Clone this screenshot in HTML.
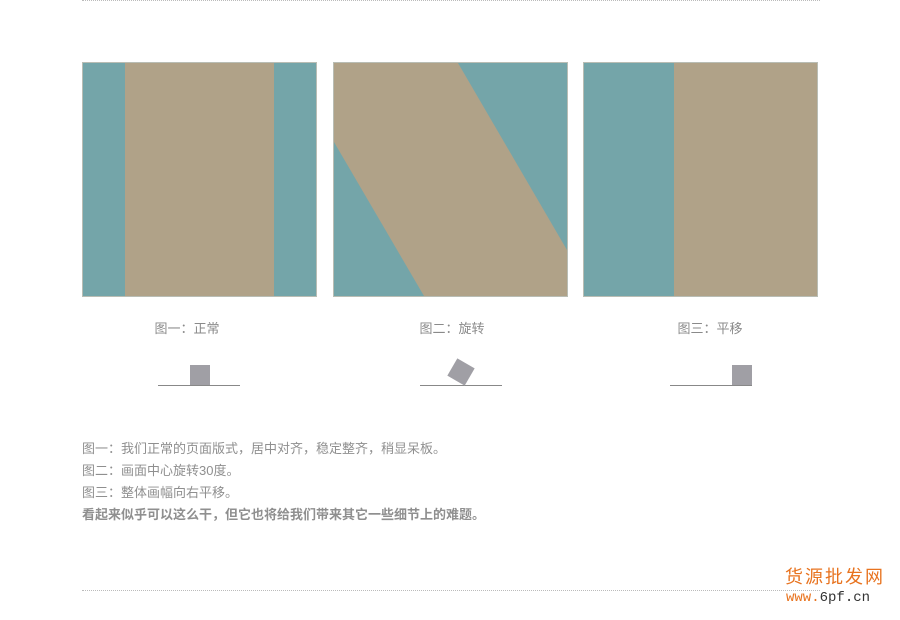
<!DOCTYPE html>
<html><head><meta charset="utf-8"><style>
body{margin:0;width:900px;height:620px;background:#fff;position:relative;overflow:hidden;font-family:"Liberation Sans","Noto Sans CJK SC",sans-serif}
.dot{position:absolute;left:82px;width:738px;border-top:1px dotted #bbb}
.cap{position:absolute;top:318px;font-size:13px;color:#8a8a8a;width:140px;text-align:center}
.ln{position:absolute;top:385px;width:82px;height:1px;background:#888}
.sq{position:absolute;width:20px;height:20px;background:#a09fa5}
.t{position:absolute;left:82px;font-size:13px;color:#8f8f8f;line-height:22px}
</style></head><body>
<div class="dot" style="top:0"></div>
<div class="dot" style="top:590px"></div>
<svg style="position:absolute;left:0;top:0" width="900" height="310">
<rect x="82.5" y="62.5" width="234" height="234" fill="#74a5a9" stroke="#b9bdb4"/>
<rect x="125" y="63" width="149" height="233" fill="#b0a288"/>
<rect x="333.5" y="62.5" width="234" height="234" fill="#74a5a9" stroke="#b9bdb4"/>
<polygon points="334,63 458,63 567,250 567,296 424,296 334,142" fill="#b0a288"/>
<rect x="583.5" y="62.5" width="234" height="234" fill="#74a5a9" stroke="#b9bdb4"/>
<rect x="674" y="63" width="143" height="233" fill="#b0a288"/>
</svg>
<div class="cap" style="left:117px">图一：正常</div>
<div class="cap" style="left:382px">图二：旋转</div>
<div class="cap" style="left:640px">图三：平移</div>
<div class="ln" style="left:158px"></div><div class="sq" style="left:190px;top:365px"></div>
<div class="ln" style="left:420px"></div><div class="sq" style="left:451px;top:362px;transform:rotate(30deg)"></div>
<div class="ln" style="left:670px"></div><div class="sq" style="left:732px;top:365px"></div>
<div class="t" style="top:438px">图一：我们正常的页面版式，居中对齐，稳定整齐，稍显呆板。<br>图二：画面中心旋转30度。<br>图三：整体画幅向右平移。<br><b>看起来似乎可以这么干，但它也将给我们带来其它一些细节上的难题。</b></div>
<div style="position:absolute;left:785px;top:563px;font-size:18px;color:#e8731f;letter-spacing:2px">货源批发网</div>
<div style="position:absolute;left:786px;top:590px;font-size:14px;color:#e8731f;font-family:'Liberation Mono',monospace">www.<span style="color:#333">6pf.cn</span></div>
</body></html>
